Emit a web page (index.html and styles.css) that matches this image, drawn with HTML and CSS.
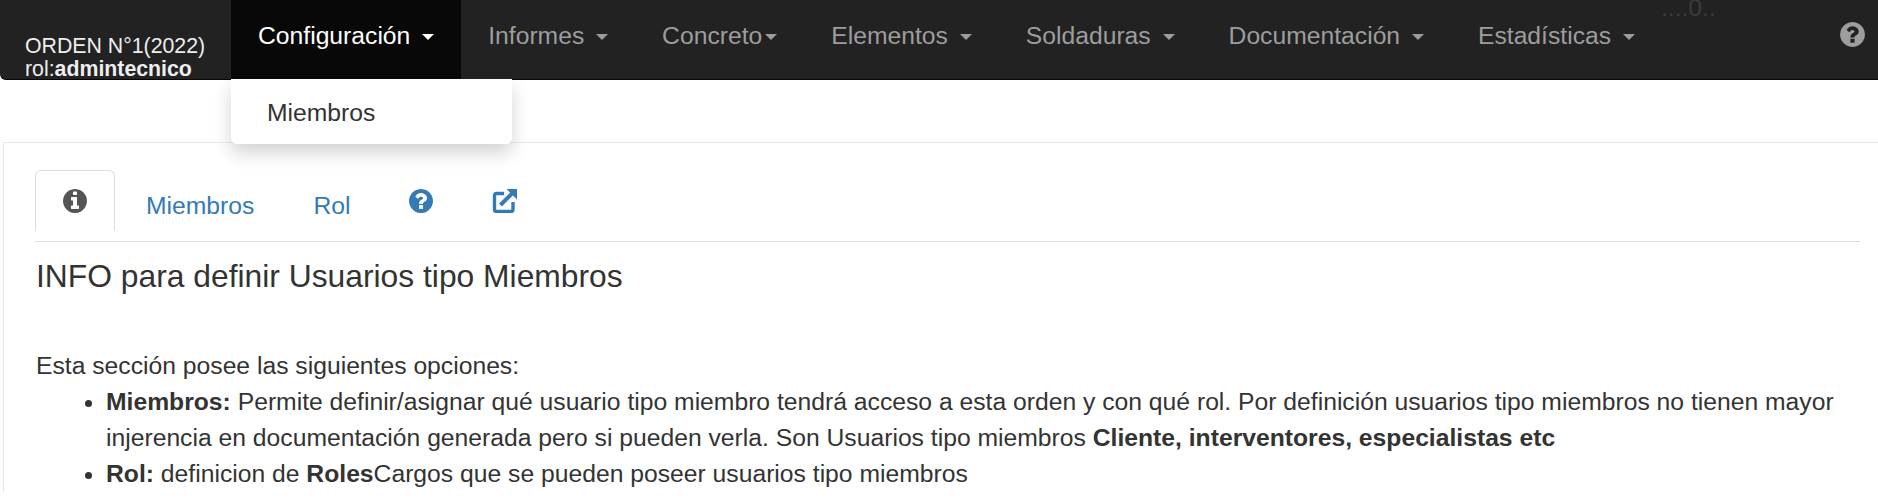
FILE: index.html
```html
<!DOCTYPE html>
<html lang="es">
<head>
<meta charset="utf-8">
<title>Miembros</title>
<link rel="stylesheet" href="styles.css">
</head>
<body>
<nav class="navbar">
  <div class="brand">
    <span>ORDEN N°1(2022)</span>
    <span>rol:<b>admintecnico</b></span>
  </div>
  <ul class="menu">
    <li class="menu-item open"><a href="#">Configuración <i class="caret"></i></a>
      <div class="dropdown"><a href="#">Miembros</a></div>
    </li>
    <li class="menu-item"><a href="#">Informes <i class="caret"></i></a></li>
    <li class="menu-item"><a href="#">Concreto<i class="caret tight"></i></a></li>
    <li class="menu-item"><a href="#">Elementos <i class="caret"></i></a></li>
    <li class="menu-item"><a href="#">Soldaduras <i class="caret"></i></a></li>
    <li class="menu-item"><a href="#">Documentación <i class="caret"></i></a></li>
    <li class="menu-item"><a href="#">Estadísticas <i class="caret"></i></a></li>
  </ul>
  <span class="dots">....0..</span>
  <a class="help" href="#"><svg class="icon" viewBox="0 0 1792 1792"><path d="M1024 1376v-192q0-14-9-23t-23-9h-192q-14 0-23 9t-9 23v192q0 14 9 23t23 9h192q14 0 23-9t9-23zm256-672q0-88-55.5-163t-138.5-116-170-41q-243 0-371 213-15 24 8 42l132 100q7 6 19 6 16 0 25-12 53-68 86-92 34-24 86-24 48 0 85.5 26t37.5 59q0 38-20 61t-68 45q-63 28-115.5 86.5t-52.5 125.5v36q0 14 9 23t23 9h192q14 0 23-9t9-23q0-19 21.5-49.5t54.5-49.5q32-18 49-28.5t46-35 44.5-48 28-60.5 12.5-81zm384 192q0 209-103 385.5t-279.5 279.5-385.5 103-385.5-103-279.5-279.5-103-385.5 103-385.5 279.5-279.5 385.5-103 385.5 103 279.5 279.5 103 385.5z"/></svg></a>
</nav>
<main class="panel">
  <ul class="tabs">
    <li class="tab active"><a href="#"><svg class="icon" viewBox="0 0 1792 1792"><path d="M1152 1376v-160q0-14-9-23t-23-9h-96v-512q0-14-9-23t-23-9h-320q-14 0-23 9t-9 23v160q0 14 9 23t23 9h96v320h-96q-14 0-23 9t-9 23v160q0 14 9 23t23 9h448q14 0 23-9t9-23zm-128-896v-160q0-14-9-23t-23-9h-192q-14 0-23 9t-9 23v160q0 14 9 23t23 9h192q14 0 23-9t9-23zm640 416q0 209-103 385.5t-279.5 279.5-385.5 103-385.5-103-279.5-279.5-103-385.5 103-385.5 279.5-279.5 385.5-103 385.5 103 279.5 279.5 103 385.5z"/></svg></a></li>
    <li class="tab"><a href="#">Miembros</a></li>
    <li class="tab"><a href="#">Rol</a></li>
    <li class="tab"><a href="#"><svg class="icon" viewBox="0 0 1792 1792"><path d="M1024 1376v-192q0-14-9-23t-23-9h-192q-14 0-23 9t-9 23v192q0 14 9 23t23 9h192q14 0 23-9t9-23zm256-672q0-88-55.5-163t-138.5-116-170-41q-243 0-371 213-15 24 8 42l132 100q7 6 19 6 16 0 25-12 53-68 86-92 34-24 86-24 48 0 85.5 26t37.5 59q0 38-20 61t-68 45q-63 28-115.5 86.5t-52.5 125.5v36q0 14 9 23t23 9h192q14 0 23-9t9-23q0-19 21.5-49.5t54.5-49.5q32-18 49-28.5t46-35 44.5-48 28-60.5 12.5-81zm384 192q0 209-103 385.5t-279.5 279.5-385.5 103-385.5-103-279.5-279.5-103-385.5 103-385.5 279.5-279.5 385.5-103 385.5 103 279.5 279.5 103 385.5z"/></svg></a></li>
    <li class="tab"><a href="#"><svg class="icon-link" viewBox="0 0 25 24"><path class="link-box" d="M12 4.500H4.500Q2.500 4.500 2.500 6.500V20.500Q2.500 22.500 4.500 22.500H19Q21 22.500 21 20.500V13"/><path class="link-shaft" d="M8.500 16L20 4.500"/><path d="M14.500 0H25V10.500Z"/></svg></a></li>
  </ul>
  <h3 class="title">INFO para definir Usuarios tipo Miembros</h3>
  <p class="intro">Esta sección posee las siguientes opciones:</p>
  <ul class="options">
    <li><b>Miembros:</b> Permite definir/asignar qué usuario tipo miembro tendrá acceso a esta orden y con qué rol. Por definición usuarios tipo miembros no tienen mayor injerencia en documentación generada pero si pueden verla. Son Usuarios tipo miembros <b>Cliente, interventores, especialistas etc</b></li>
    <li><b>Rol:</b> definicion de <b>Roles</b>Cargos que se pueden poseer usuarios tipo miembros</li>
  </ul>
</main>
</body>
</html>
```

FILE: styles.css
```css
* { box-sizing: border-box; }
html, body { margin: 0; height: 500px; overflow: hidden; }
body {
  background: #fff;
  color: #333;
  font-family: "Liberation Sans", Arial, sans-serif;
  font-size: 24.7px;
  line-height: 36px;
}
a { text-decoration: none; }
ul { list-style: none; margin: 0; padding: 0; }
.icon { display: block; width: 28px; height: 28px; margin: 0 -2px; fill: currentColor; }

.navbar {
  display: flex;
  height: 80px;
  background: #222;
  border-bottom: 1px solid #080808;
  border-radius: 0 0 0 6px;
  position: relative;
}
.brand {
  width: 231px;
  padding: 35px 0 0 25px;
  display: flex;
  flex-direction: column;
  color: #eee;
  font-size: 21.3px;
  line-height: 23px;
}
.menu { display: flex; }
.menu-item { position: relative; }
.menu-item > a {
  display: block;
  height: 79px;
  padding: 18px 27px 0;
  color: #9d9d9d;
}
.menu-item.open > a { background: #080808; color: #fff; }
.caret {
  display: inline-block;
  vertical-align: middle;
  margin-left: 5px;
  border-top: 6px solid currentColor;
  border-left: 6px solid transparent;
  border-right: 6px solid transparent;
}
.caret.tight { margin-left: 3px; }
.dropdown {
  position: absolute;
  top: 79px;
  left: 0;
  width: 281px;
  height: 65px;
  padding: 16px 36px;
  background: #fff;
  border-radius: 0 0 6px 6px;
  box-shadow: 0 9px 18px rgba(0,0,0,.175);
  z-index: 5;
}
.dropdown a { color: #333; }
.dots {
  margin-left: -1px;
  margin-top: -10px;
  color: #3c3c3c;
}
.help { margin-left: auto; margin-right: 13px; margin-top: 20px; color: #9d9d9d; }
.help .icon { width: 29px; height: 29px; }

.panel {
  margin: 62px 0 0 3px;
  padding: 27px 18px 0 31px;
  border-top: 1px solid #e7e7ef;
  border-left: 1px solid #e7e7ef;
}
.tabs {
  display: flex;
  gap: 3px;
  padding-bottom: 10px;
  border-bottom: 1px solid #ddd;
}
.tab { height: 61px; border: 1px solid transparent; border-bottom: 0; }
.tab a { display: block; padding: 17px 27px 0; color: #337ab7; }
.tab .icon { margin-top: -1px; }
.icon-link { display: block; width: 25px; height: 24px; margin-top: 1px; fill: currentColor; }
.link-box { fill: none; stroke: currentColor; stroke-width: 3.4; }
.link-shaft { fill: none; stroke: currentColor; stroke-width: 4; }
.tab.active { border-color: #ddd; border-radius: 6px 6px 0 0; }
.tab.active a { color: #555; }
.title {
  margin: 16px 0 0;
  padding-left: 1px;
  font-size: 31.8px;
  font-weight: 400;
  line-height: 36px;
}
.intro { margin: 54px 0 0; padding-left: 1px; }
.options { margin: 0 -18px 0 0; padding-left: 71px; list-style: disc; }
```
